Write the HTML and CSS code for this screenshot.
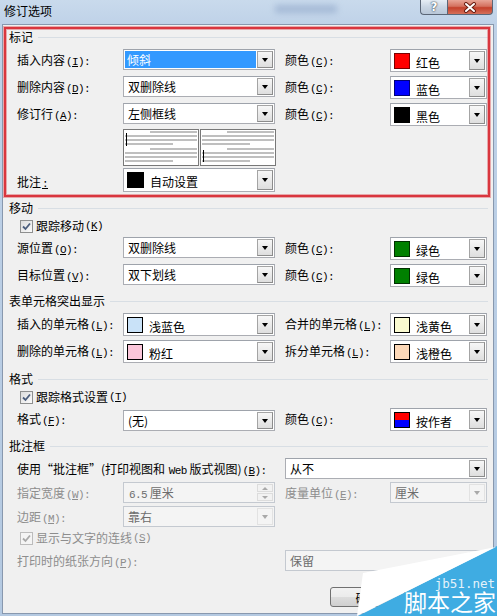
FILE: index.html
```html
<!DOCTYPE html>
<html>
    <head>
        <meta charset="UTF-8"/>
        <title>修订选项</title>
        <link rel="stylesheet" href="styles.css">
    </head>

    <body>
        <div class="window">
            <div class="titlebar">
                <span class="title">修订选项</span>
                <span class="blur"></span>
                <div class="caption-btns">
                    <span class="btn-help">?</span>
                    <span class="btn-close">
                        <svg width="14" height="11" viewBox="0 0 14 11">
                            <path d="M3 2 L11 9 M11 2 L3 9" stroke="#6a1d12" stroke-width="4" stroke-linecap="round"/>
                            <path d="M3 2 L11 9 M11 2 L3 9" stroke="#fff" stroke-width="2" stroke-linecap="round"/>
                        </svg>
                    </span>
                </div>
            </div>

            <div class="client">
                <!-- 标记 -->
                <div class="group g-first">标记</div>
                <div class="row m5">
                    <label>插入内容<span class="key">(<u>I</u>):</span></label>
                    <div class="combo"><span class="val sel">倾斜</span><i class="drop"></i></div>
                    <label class="lbl2">颜色<span class="key">(<u>C</u>):</span></label>
                    <div class="combo color"><b class="swatch red"></b><span class="val">红色</span><i class="drop"></i></div>
                </div>
                <div class="row">
                    <label>删除内容<span class="key">(<u>D</u>):</span></label>
                    <div class="combo"><span class="val">双删除线</span><i class="drop"></i></div>
                    <label class="lbl2">颜色<span class="key">(<u>C</u>):</span></label>
                    <div class="combo color"><b class="swatch blue"></b><span class="val">蓝色</span><i class="drop"></i></div>
                </div>
                <div class="row">
                    <label>修订行<span class="key">(<u>A</u>):</span></label>
                    <div class="combo"><span class="val">左侧框线</span><i class="drop"></i></div>
                    <label class="lbl2">颜色<span class="key">(<u>C</u>):</span></label>
                    <div class="combo color"><b class="swatch black"></b><span class="val">黑色</span><i class="drop"></i></div>
                </div>
                <div class="row m3">
                    <label></label>
                    <div class="preview">
                        <div class="pbox">
                            <svg width="74" height="35" viewBox="0 0 74 35">
                                <g stroke="#ababab" stroke-width="1.4">
                                    <path d="M26 2H73 M1 6H73 M1 10H73 M1 14H49 M26 19H73 M1 23H73 M1 27H73 M1 31H49"/>
                                </g>
                                <path d="M2.5 3V16" stroke="#000" stroke-width="1"/>
                            </svg>
                        </div>
                        <div class="pbox">
                            <svg width="74" height="35" viewBox="0 0 74 35">
                                <g stroke="#ababab" stroke-width="1.4">
                                    <path d="M26 2H73 M1 6H73 M1 10H73 M1 14H49 M26 19H73 M1 23H73 M1 27H73 M1 31H49"/>
                                </g>
                                <path d="M2.5 20V32" stroke="#000" stroke-width="1"/>
                            </svg>
                        </div>
                    </div>
                </div>
                <div class="row m2">
                    <label class="lower">批注<span class="key"><u>:</u></span></label>
                    <div class="combo color tall"><b class="swatch black big"></b><span class="val">自动设置</span><i class="drop"></i></div>
                </div>

                <!-- 移动 -->
                <div class="group">移动</div>
                <div class="check m5"><span class="box"><svg width="11" height="11" viewBox="0 0 11 11"><path d="M2 5.5 L4.5 8 L9 2.5" fill="none" stroke="#4b5d7c" stroke-width="1.8"/></svg></span>跟踪移动<span class="key">(<u>K</u>)</span></div>
                <div class="row">
                    <label>源位置<span class="key">(<u>O</u>):</span></label>
                    <div class="combo"><span class="val">双删除线</span><i class="drop"></i></div>
                    <label class="lbl2">颜色<span class="key">(<u>C</u>):</span></label>
                    <div class="combo color"><b class="swatch green"></b><span class="val">绿色</span><i class="drop"></i></div>
                </div>
                <div class="row">
                    <label>目标位置<span class="key">(<u>V</u>):</span></label>
                    <div class="combo"><span class="val">双下划线</span><i class="drop"></i></div>
                    <label class="lbl2">颜色<span class="key">(<u>C</u>):</span></label>
                    <div class="combo color"><b class="swatch green"></b><span class="val">绿色</span><i class="drop"></i></div>
                </div>

                <!-- 表单元格突出显示 -->
                <div class="group m7">表单元格突出显示</div>
                <div class="row m5">
                    <label>插入的单元格<span class="key">(<u>L</u>):</span></label>
                    <div class="combo color"><b class="swatch lblue"></b><span class="val">浅蓝色</span><i class="drop"></i></div>
                    <label class="lbl2">合并的单元格<span class="key">(<u>L</u>):</span></label>
                    <div class="combo color"><b class="swatch lyellow"></b><span class="val">浅黄色</span><i class="drop"></i></div>
                </div>
                <div class="row">
                    <label>删除的单元格<span class="key">(<u>L</u>):</span></label>
                    <div class="combo color"><b class="swatch pink"></b><span class="val">粉红</span><i class="drop"></i></div>
                    <label class="lbl2">拆分单元格<span class="key">(<u>L</u>):</span></label>
                    <div class="combo color"><b class="swatch lorange"></b><span class="val">浅橙色</span><i class="drop"></i></div>
                </div>

                <!-- 格式 -->
                <div class="group">格式</div>
                <div class="check"><span class="box"><svg width="11" height="11" viewBox="0 0 11 11"><path d="M2 5.5 L4.5 8 L9 2.5" fill="none" stroke="#4b5d7c" stroke-width="1.8"/></svg></span>跟踪格式设置<span class="key">(<u>T</u>)</span></div>
                <div class="row">
                    <label>格式<span class="key">(<u>F</u>):</span></label>
                    <div class="combo low"><span class="val">(无)</span><i class="drop"></i></div>
                    <label class="lbl2">颜色<span class="key">(<u>C</u>):</span></label>
                    <div class="combo color"><b class="swatch author"></b><span class="val">按作者</span><i class="drop"></i></div>
                </div>

                <!-- 批注框 -->
                <div class="group m8">批注框</div>
                <div class="row wide m5">
                    <label>使用“批注框”(打印视图和 <span class="key">Web</span> 版式视图)<span class="key">(<u>B</u>):</span></label>
                    <div class="combo"><span class="val">从不</span><i class="drop"></i></div>
                </div>
                <div class="row m3 off">
                    <label>指定宽度<span class="key">(<u>W</u>):</span></label>
                    <div class="combo spin"><span class="val"><span class="key">6.5</span> 厘米</span><i class="updown"><i class="up"></i><i class="down"></i></i></div>
                    <label class="lbl2">度量单位<span class="key">(<u>E</u>):</span></label>
                    <div class="combo"><span class="val">厘米</span><i class="drop"></i></div>
                </div>
                <div class="row m3 off">
                    <label>边距<span class="key">(<u>M</u>):</span></label>
                    <div class="combo"><span class="val">靠右</span><i class="drop"></i></div>
                </div>
                <div class="check m3 off"><span class="box"><svg width="11" height="11" viewBox="0 0 11 11"><path d="M2 5.5 L4.5 8 L9 2.5" fill="none" stroke="#a9a9a9" stroke-width="1.8"/></svg></span>显示与文字的连线<span class="key">(<u>S</u>)</span></div>
                <div class="row wide m5 off">
                    <label>打印时的纸张方向<span class="key">(<u>P</u>):</span></label>
                    <div class="combo"><span class="val">保留</span><i class="drop"></i></div>
                </div>

                <div class="buttons">
                    <span class="btn">确定</span>
                </div>
            </div>

            <!-- 红框(注释) -->
            <div class="mark-frame"></div>

            <!-- 水印 -->
            <svg class="watermark" width="142" height="70" viewBox="0 0 142 70">
                <polygon points="142,0 142,70 3,70" fill="#3facE2"/>
                <polygon points="8,27 141,1 2,70" fill="#fff"/>
                <text x="140" y="42" text-anchor="end" class="wm-url">jb51.net</text>
                <text x="141" y="65" text-anchor="end" class="wm-name">脚本之家</text>
            </svg>
        </div>
    </body>
</html>
```

FILE: styles.css
```css
html,body{
    margin:0;
    padding:0;
}
body{
    width:497px;
    height:616px;
    overflow:hidden;
    font-family:"Noto Sans CJK SC","Liberation Sans",sans-serif;
    font-size:12px;
    color:#000;
}
u{
    text-decoration:underline;
    text-underline-offset:1px;
}

.window{
    position:relative;
    width:497px;
    height:616px;
    background:linear-gradient(#c9daec,#bfd2e8 24px,#b4c9e1);
}

/* title bar */
.titlebar{
    position:relative;
    height:24px;
    display:flex;
    align-items:flex-start;
}
.title{
    padding:3px 0 0 4px;
    line-height:15px;
}
.blur{
    position:absolute;
    left:275px;
    top:5px;
    width:62px;
    height:8px;
    background:#8fa6c8;
    filter:blur(3px);
    opacity:.6;
}
.caption-btns{
    margin-left:auto;
    margin-right:4px;
    display:flex;
}
.btn-help,
.btn-close{
    display:flex;
    align-items:center;
    justify-content:center;
    height:15px;
    box-sizing:border-box;
    border:1px solid #5b6677;
    border-top:none;
}
.btn-help{
    width:27px;
    border-right:none;
    border-radius:0 0 0 4px;
    background:linear-gradient(#e6edf5,#c9d5e3 50%,#b9c7d8);
    color:#fff;
    font-family:"DejaVu Sans",sans-serif;
    font-weight:bold;
    font-size:12px;
    line-height:14px;
    text-shadow:0 0 2px #33404f,0 0 1px #33404f;
}
.btn-close{
    width:46px;
    border-radius:0 0 4px 0;
    background:linear-gradient(#e8a597,#d4715f 45%,#c4402b 55%,#d5705a);
}

/* client area */
.client{
    margin-left:2px;
    width:492px;
    height:590px;
    box-sizing:border-box;
    border:1px solid #8898ae;
    background:#f0f0f0;
}

.group{
    display:flex;
    align-items:center;
    height:14px;
    line-height:14px;
    margin-top:9px;
    padding:0 5px 0 6px;
}
.group::after{
    content:"";
    flex:1;
    margin-left:5px;
    border-top:1px solid #d8dee4;
}
.g-first{
    margin-top:5px;
}

.row{
    display:grid;
    grid-template-columns:106px 152px 10px 105px 97px;
    align-items:start;
    padding-left:14px;
    margin-top:4px;
}
.row label{
    display:block;
    height:21px;
    line-height:21px;
    white-space:nowrap;
}
.row label.lower{
    padding-top:3px;
}
.row .lbl2{
    grid-column:4;
}
.row.wide{
    grid-template-columns:268px 202px;
}

.m2{margin-top:2px;}
.m3{margin-top:3px;}
.m5{margin-top:5px;}
.m7{margin-top:7px;}
.m8{margin-top:8px;}

.key{
    font-family:"Liberation Mono",monospace;
    font-size:11px;
    line-height:1;
    letter-spacing:-.6px;
    margin-left:1px;
}

/* combo box */
.combo{
    display:flex;
    align-items:center;
    height:21px;
    padding:1px;
    box-sizing:border-box;
    border:1px solid #abadb3;
    border-top-color:#9ea3ab;
    background:#fff;
}
.combo.low{
    margin-top:2px;
}
.combo .val{
    flex:1;
    padding-left:3px;
    line-height:17px;
    height:17px;
    white-space:nowrap;
    overflow:hidden;
}
.combo .val.sel{
    align-self:stretch;
    margin-right:1px;
    padding-left:2px;
    background:#3399ff;
    color:#fff;
}
.drop{
    display:flex;
    align-items:center;
    justify-content:center;
    width:16px;
    align-self:stretch;
    box-sizing:border-box;
    border:1px solid #a4a4a4;
    border-right-color:#8c8c8c;
    border-bottom-color:#8c8c8c;
    background:linear-gradient(#f7f7f7,#dedede);
}
.drop::before{
    content:"";
    border-left:3.5px solid transparent;
    border-right:3.5px solid transparent;
    border-top:4px solid #000;
}

.combo.color{
    height:23px;
}
.combo.tall{
    height:24px;
}
.combo.color .val{
    padding-left:6px;
    padding-top:3px;
}
.swatch{
    display:block;
    width:16px;
    height:16px;
    margin-left:2px;
    box-sizing:border-box;
    border:1px solid #000;
}
.swatch.big{
    width:17px;
}
.red{background:#ff0000;border-color:#7a0000;}
.blue{background:#0000ff;border-color:#00007a;}
.black{background:#000;}
.green{background:#008000;border-color:#003000;}
.lblue{background:#c9e2f8;}
.lyellow{background:#fafad0;}
.pink{background:#fbc6da;}
.lorange{background:#fcd8b8;}
.author{background:linear-gradient(#ff0000 50%,#0000ff 50%);}

/* preview */
.preview{
    display:flex;
    gap:1px;
    height:37px;
}
.pbox{
    flex:1;
    box-sizing:border-box;
    border:1px solid #787878;
    background:#fff;
}
.pbox svg{
    display:block;
}

/* checkbox */
.check{
    display:flex;
    align-items:center;
    height:14px;
    line-height:14px;
    margin-top:4px;
    padding-left:17px;
}
.box{
    display:flex;
    align-items:center;
    justify-content:center;
    width:13px;
    height:13px;
    margin-right:3px;
    box-sizing:border-box;
    border:1px solid #8e8f8f;
    background:linear-gradient(135deg,#dcdcdc,#fbfbfb);
}

/* disabled */
.off{
    color:#8d8d8d;
}
.off .box{
    border-color:#bcbcbc;
    background:#f4f4f4;
}
.off .combo{
    background:#f4f4f4;
    border-color:#c4c9d0;
    color:#6d6d6d;
}
.off .drop{
    border-color:#e2e2e2;
    background:#f4f4f4;
}
.off .drop::before{
    border-top-color:#a9a9a9;
}
.updown{
    display:flex;
    flex-direction:column;
    width:16px;
    align-self:stretch;
    gap:1px;
}
.updown i{
    flex:1;
    display:flex;
    align-items:center;
    justify-content:center;
    border:1px solid #dcdcdc;
    background:#f2f2f2;
}
.updown .up::before{
    content:"";
    border-left:3px solid transparent;
    border-right:3px solid transparent;
    border-bottom:3px solid #a9a9a9;
}
.updown .down::before{
    content:"";
    border-left:3px solid transparent;
    border-right:3px solid transparent;
    border-top:3px solid #a9a9a9;
}

/* buttons */
.buttons{
    display:flex;
    gap:8px;
    margin-top:16px;
    padding-left:327px;
}
.btn{
    display:flex;
    align-items:center;
    justify-content:center;
    width:75px;
    height:20px;
    box-sizing:border-box;
    border:1px solid #707070;
    border-radius:3px;
    background:linear-gradient(#f2f2f2,#ebebeb 50%,#dddddd 50%,#cfcfcf);
}

/* overlays */
.mark-frame{
    position:absolute;
    left:4px;
    top:27px;
    width:486px;
    height:170px;
    box-sizing:border-box;
    border:2px solid #d9363e;
    box-shadow:0 0 0 1px rgba(225,110,115,.55),inset 0 0 0 1px rgba(225,110,115,.55);
}
.watermark{
    position:absolute;
    right:0;
    bottom:0;
}
.wm-url{
    font-family:"DejaVu Sans Mono",monospace;
    font-size:12.5px;
    fill:#e4f2fa;
}
.wm-name{
    font-family:"Noto Sans CJK SC",sans-serif;
    font-size:23px;
    fill:#fff;
}
```
